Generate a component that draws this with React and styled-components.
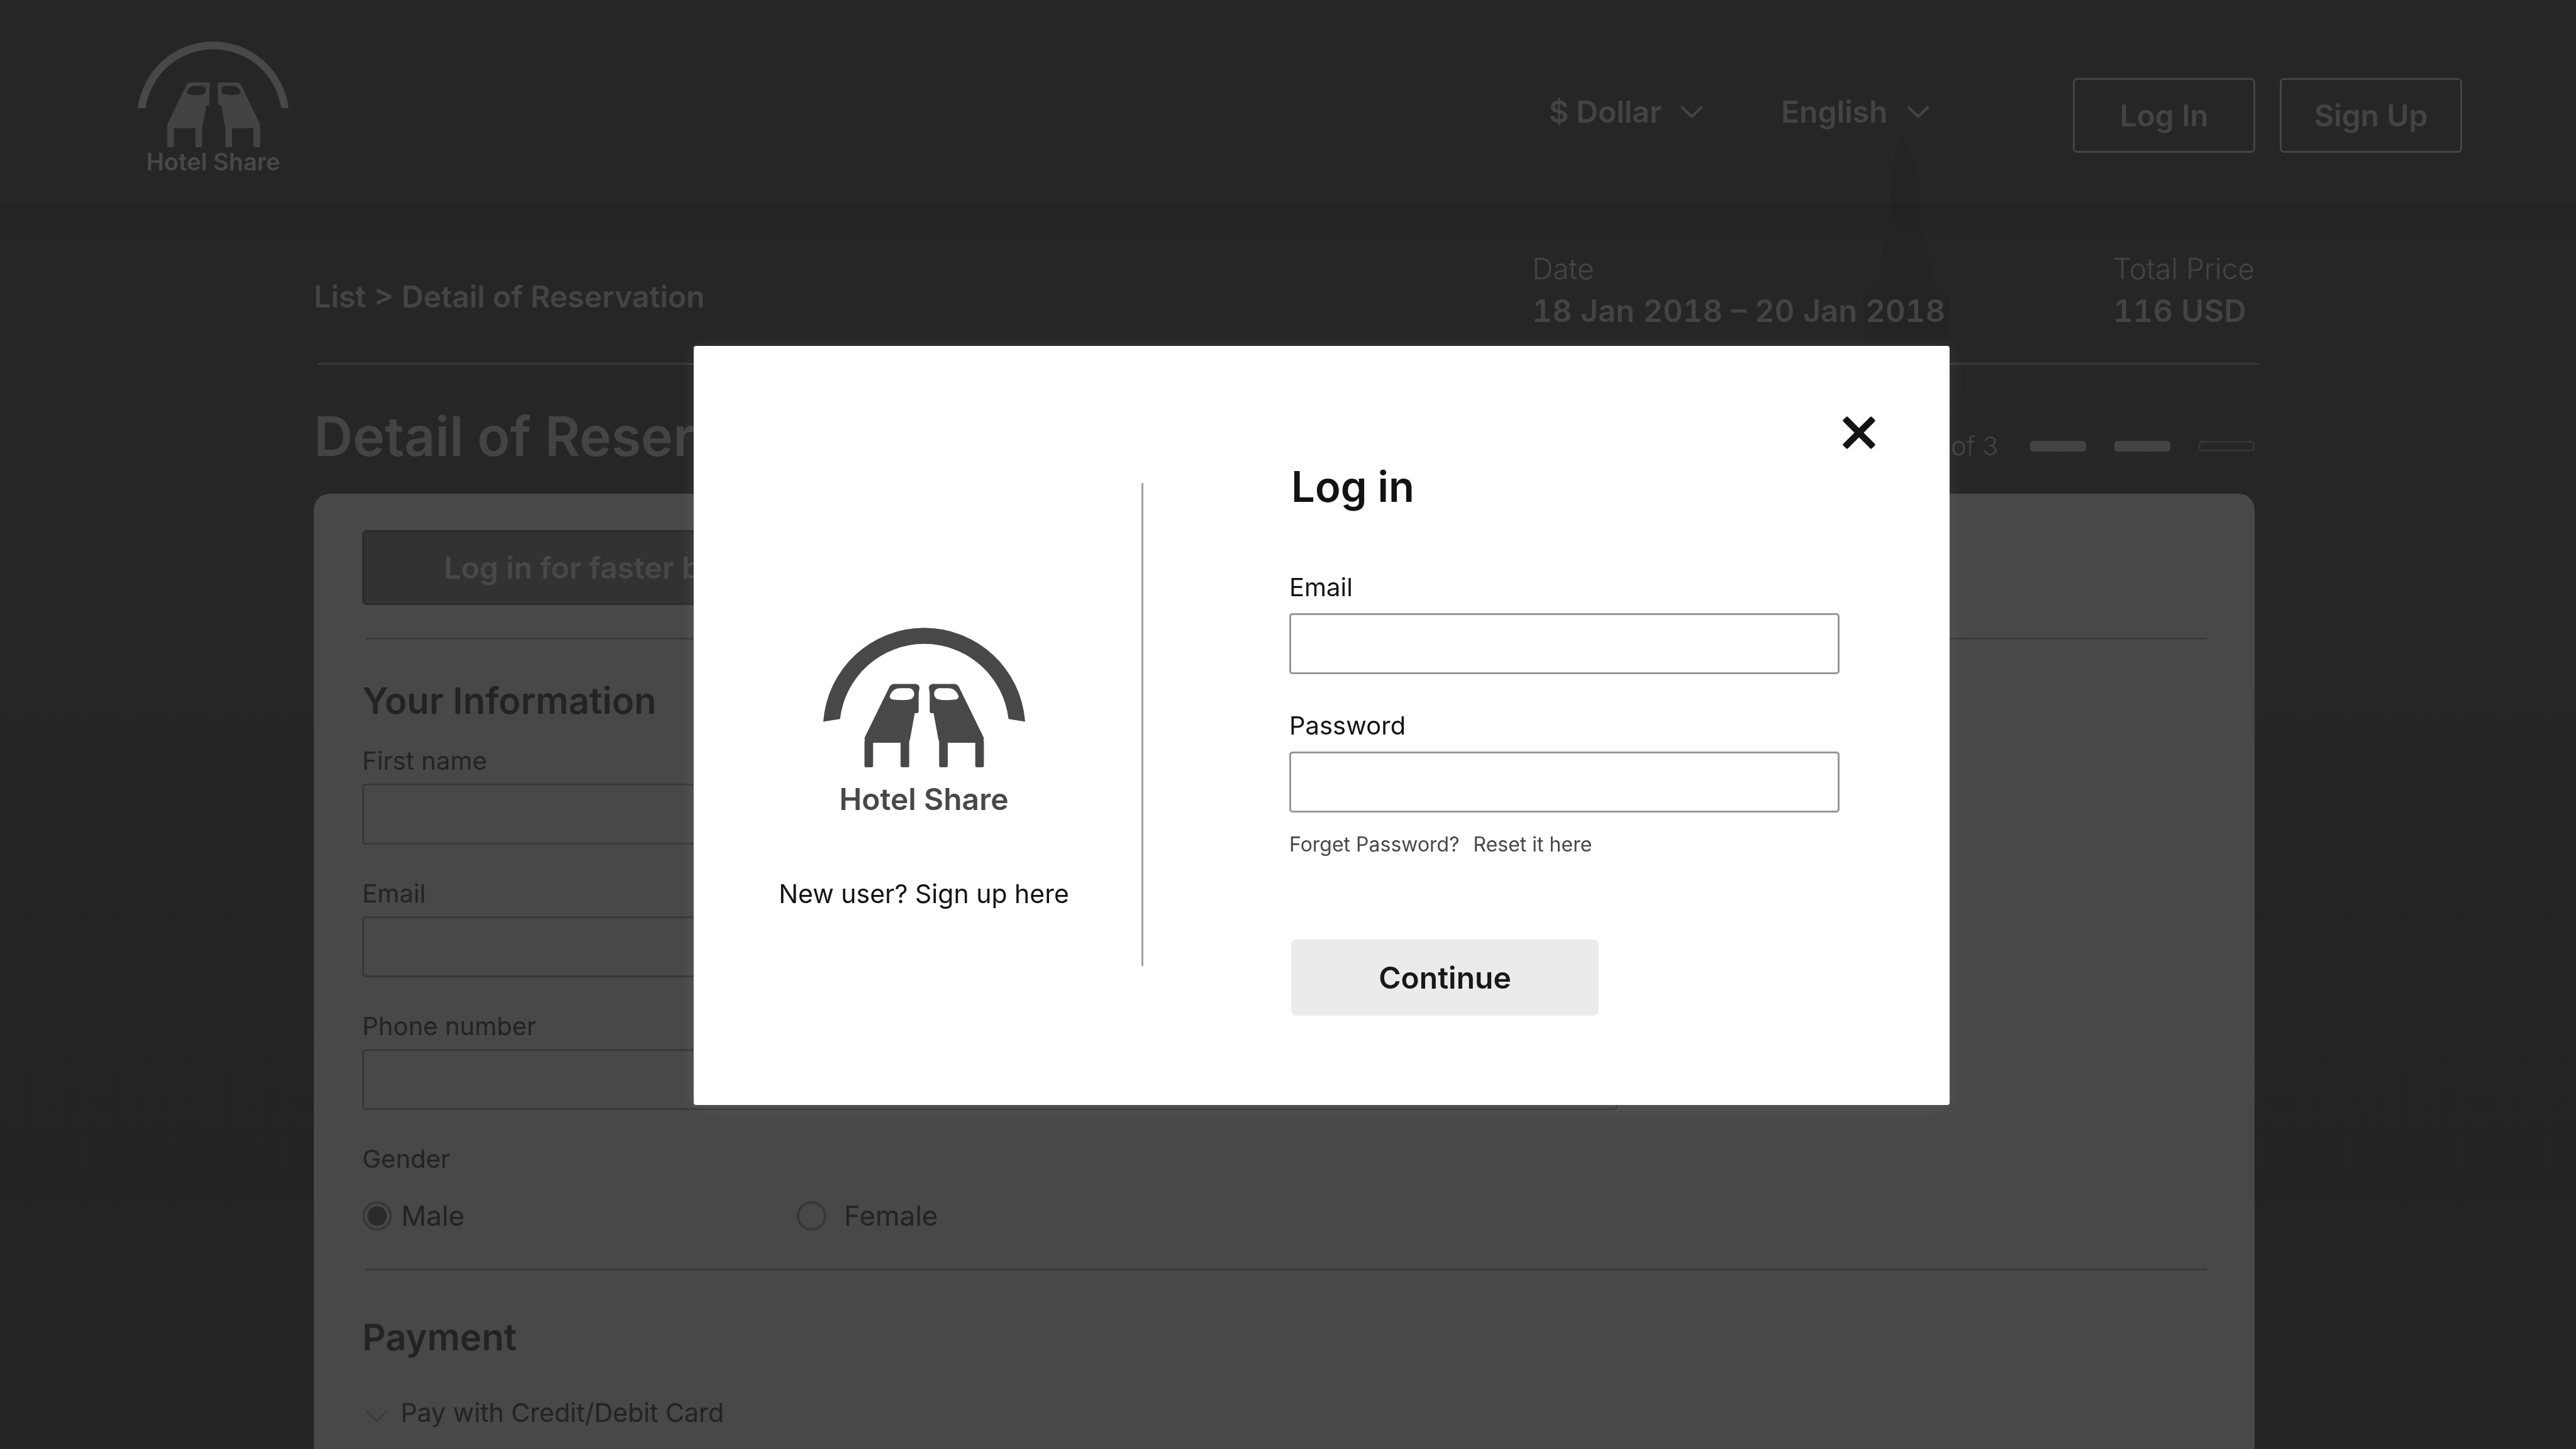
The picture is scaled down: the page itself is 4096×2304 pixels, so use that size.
import React from "react";
import styled, { createGlobalStyle } from "styled-components";

const GlobalStyle = createGlobalStyle`
  *, *::before, *::after { box-sizing: border-box; }
  html, body { margin: 0; background: #252525; }
  body { overflow: hidden; font-family: Inter, "Liberation Sans", sans-serif; }
  button, input, select { font: inherit; color: inherit; margin: 0; }
  h1, h2, p { margin: 0; font-weight: inherit; }
`;

/* ---------- page behind the dialog ---------- */

const Page = styled.div`
  position: relative;
  display: flex;
  flex-direction: column;
  height: 100vh;
  overflow: hidden;
  color: #444444;
  background: linear-gradient(
    180deg,
    #262626 0%,
    #262626 26%,
    #272726 46%,
    #242424 54%,
    #232323 82%,
    #252524 92%,
    #252524 100%
  );
`;

const Skyline = styled.svg`
  position: absolute;
  top: 0;
  right: 0;
  width: 1200px;
  height: 800px;
  fill: #242424;
`;

const Header = styled.header`
  position: relative;
  display: flex;
  justify-content: space-between;
  align-items: flex-start;
  flex: none;
  height: 324px;
  padding: 66px 181px 0 219px;
  box-shadow: 0 8px 48px rgba(0, 0, 0, 0.14);
`;

const Brand = styled.a`
  display: flex;
  flex-direction: column;
  align-items: center;
  color: #484848;
  text-decoration: none;
`;

const BrandName = styled.span`
  font-size: ${(p) => (p.$large ? 48 : 38)}px;
  line-height: ${(p) => (p.$large ? 56 : 44)}px;
  font-weight: 600;
  margin-top: ${(p) => (p.$large ? 23 : 1)}px;
`;

const HeaderMark = styled.svg`
  width: 240px;
  height: 168px;
  fill: currentColor;
  overflow: visible;
`;

const DialogMark = styled.svg`
  width: 321px;
  height: 222px;
  fill: currentColor;
  overflow: visible;
`;

const Nav = styled.nav`
  display: flex;
  align-items: flex-start;
  padding-top: 58px;
  font-size: 48px;
  line-height: 60px;
  font-weight: 600;
`;

const Pickers = styled.div`
  display: flex;
  align-items: center;
  gap: 124px;
  height: 107px;
  margin-right: 228px;
`;

const Picker = styled.label`
  display: flex;
  align-items: center;
  gap: 30px;
`;

const PickerSelect = styled.select`
  appearance: none;
  border: 0;
  padding: 0;
  background: transparent;
  line-height: 60px;
`;

const ChevronIcon = styled.svg`
  width: 36px;
  height: 20px;
  fill: none;
  stroke: currentColor;
  stroke-width: ${(p) => (p.$thin ? 3 : 4)};
  color: ${(p) => (p.$thin ? "#3a3a3a" : "inherit")};
`;

const HeaderButtons = styled.div`
  display: flex;
  gap: 39px;
`;

const OutlineButton = styled.button`
  width: 290px;
  height: 119px;
  padding: 0;
  border: 3px solid #454545;
  border-radius: 7px;
  background: transparent;
`;

const Main = styled.main`
  position: relative;
  display: flex;
  flex-direction: column;
  flex: 1;
  padding: 0 511px 0 499px;
`;

const Summary = styled.div`
  display: flex;
  justify-content: space-between;
  align-items: flex-start;
  padding: 75px 0 52px;
`;

const Breadcrumb = styled.nav`
  padding-top: 43px;
  font-size: 48px;
  line-height: 60px;
  font-weight: 600;
  a { color: inherit; text-decoration: none; }
`;

const Facts = styled.dl`
  display: flex;
  gap: 267px;
  margin: 0;
`;

const Fact = styled.div`
  display: flex;
  flex-direction: column;
  gap: 10px;
`;

const FactName = styled.dt`
  font-size: 46px;
  line-height: 56px;
  font-weight: 300;
`;

const FactValue = styled.dd`
  margin: 0;
  font-size: 49px;
  line-height: 60px;
  font-weight: 600;
  font-variant-numeric: tabular-nums;
`;

const PageRule = styled.hr`
  width: auto;
  height: 3px;
  margin: 0 -8px 0 6px;
  border: 0;
  background: #383838;
`;

const TitleRow = styled.div`
  display: flex;
  justify-content: space-between;
  align-items: flex-end;
  padding: 64px 0 41px;
`;

const Title = styled.h1`
  font-size: 86px;
  line-height: 100px;
  font-weight: 600;
`;

const Steps = styled.div`
  display: flex;
  align-items: center;
  gap: 45px;
  padding-bottom: 11px;
`;

const StepText = styled.span`
  margin-right: 6px;
  font-size: 41px;
  line-height: 48px;
  font-weight: 300;
`;

const StepBar = styled.span`
  width: 89px;
  height: 17px;
  border: 3px solid ${(p) => (p.$done ? "#434343" : "#353535")};
  border-radius: 5px;
  background: ${(p) => (p.$done ? "#434343" : "transparent")};
`;

const Card = styled.section`
  flex: 1;
  padding: 58px 76px 0 77px;
  border-radius: 25px 25px 0 0;
  background: #484848;
  color: #232323;
`;

const FastLogin = styled.button`
  display: block;
  height: 119px;
  padding: 0 127px;
  border: 3px solid #2b2b2b;
  border-radius: 7px;
  background: #323232;
  color: #484848;
  font-size: 48px;
  font-weight: 600;
`;

const CardRule = styled.hr`
  height: 3px;
  margin: ${(p) => p.$above}px 0 ${(p) => p.$below}px 5px;
  border: 0;
  background: #3a3a3a;
`;

const SectionTitle = styled.h2`
  font-size: 58px;
  line-height: 72px;
  font-weight: 600;
  margin-bottom: ${(p) => p.$below}px;
`;

const Fields = styled.div`
  display: flex;
  flex-direction: column;
  gap: ${(p) => p.$gap}px;
`;

const Field = styled.div`
  display: flex;
  flex-direction: column;
  gap: ${(p) => p.$gap}px;
  width: ${(p) => p.$width}px;
  font-size: 40px;
  line-height: 48px;
`;

const TextInput = styled.input`
  width: 100%;
  height: 97px;
  padding: 0 24px;
  border: 3px solid ${(p) => (p.$dim ? "#383838" : "#979797")};
  border-radius: 5px;
  background: transparent;
  outline: 0;
`;

const Gender = styled.fieldset`
  margin: 0;
  padding: 0;
  border: 0;
  font-size: 40px;
  line-height: 48px;
  legend { padding: 0; }
`;

const Options = styled.div`
  display: flex;
  padding-top: 38px;
`;

const Option = styled.label`
  display: flex;
  align-items: center;
  gap: ${(p) => p.$gap}px;
  min-width: 691px;
  font-size: 44px;
  line-height: 56px;
`;

const Radio = styled.input`
  appearance: none;
  display: grid;
  place-items: center;
  width: 47px;
  height: 47px;
  border: 4px solid #383838;
  border-radius: 50%;
  &:checked::before {
    content: "";
    width: 31px;
    height: 31px;
    border-radius: 50%;
    background: #2a2a2a;
  }
`;

const PaymentMethod = styled.button`
  display: flex;
  align-items: center;
  gap: 20px;
  padding: 0 0 0 5px;
  border: 0;
  background: transparent;
  font-size: 41px;
  line-height: 48px;
  svg { margin-top: 12px; }
`;

/* ---------- dialog ---------- */

const Overlay = styled.div`
  position: fixed;
  inset: 0;
  display: flex;
  align-items: center;
  justify-content: center;
  padding: 2px 0 0 107px;
`;

const Dialog = styled.div`
  display: flex;
  width: 1997px;
  border-radius: 4px;
  background: #ffffff;
  color: #131313;
  box-shadow: 0 3px 28px rgba(255, 255, 255, 0.09);
`;

const Aside = styled.div`
  display: flex;
  flex-direction: column;
  align-items: center;
  width: 712px;
  padding: 448px 0 0 20px;
`;

const SignUpLink = styled.a`
  margin-top: 98px;
  color: inherit;
  font-size: 41px;
  line-height: 48px;
  text-decoration: none;
`;

const Divider = styled.div`
  width: 3px;
  margin: 218px 0 221px;
  background: #a0a0a0;
`;

const LoginForm = styled.form`
  display: flex;
  flex-direction: column;
  align-items: flex-start;
  flex: 1;
  padding: 111px 117px 142px 232px;
`;

const CloseButton = styled.button`
  align-self: flex-end;
  width: 54px;
  height: 54px;
  padding: 0;
  border: 0;
  background: transparent;
  svg { display: block; width: 100%; height: 100%; }
`;

const DialogTitle = styled.h2`
  margin: 19px 0 96px 3px;
  font-size: 67px;
  line-height: 80px;
  font-weight: 600;
`;

const Hint = styled.p`
  display: flex;
  gap: 22px;
  margin-top: 31px;
  color: #484848;
  font-size: 32px;
  line-height: 40px;
  a { color: inherit; text-decoration: none; }
`;

const ContinueButton = styled.button`
  width: 489px;
  height: 121px;
  margin: 131px 0 0 3px;
  padding: 0;
  border: 0;
  border-radius: 8px;
  background: #ebebeb;
  color: #17181a;
  font-size: 48px;
  font-weight: 600;
`;

/* ---------- drawings ---------- */

const GUEST =
  "M541 391H645Q664 393 664 412L660 437V524Q660 534 650 534H641L618 660Q616 668 614 671V789Q614 797 606 797H580Q572 797 572 789V678H438V789Q438 797 430 797H404Q396 797 396 789V672Q399 666 397 662Q395 656 398 650L518 405Q526 391 541 391Z" +
  "M567 412H612C645 414 647 458 618 466Q590 474 533 467C520 464 516 453 522 443Q538 412 567 412Z";

function Guests() {
  return (
    <>
      <path fillRule="evenodd" d={GUEST} />
      <path fillRule="evenodd" d={GUEST} transform="translate(1374 0) scale(-1 1)" />
    </>
  );
}

function Chevron({ thin }) {
  return (
    <ChevronIcon $thin={thin} viewBox="0 0 36 20" aria-hidden="true">
      <path d="M1.500 1.500L18 17.500L34.500 1.500" />
    </ChevronIcon>
  );
}

function TextField({ id, label, type = "text", dim, gap, width }) {
  return (
    <Field $gap={gap} $width={width}>
      <label htmlFor={id}>{label}</label>
      <TextInput id={id} type={type} $dim={dim} />
    </Field>
  );
}

export default function App() {
  return (
    <>
      <GlobalStyle />
      <Page>
        <Skyline viewBox="0 0 1200 800" aria-hidden="true">
          <path d="M128 213L118 240L112 300L110 360L96 412L92 452L66 470L72 560H198L204 474L178 452L172 412L158 360L156 300L146 250Z" />
        </Skyline>

        <Header>
          <Brand href="#home">
            <HeaderMark viewBox="174 130 1014 710" aria-hidden="true">
              <path d="M174 580A510.600 510.600 0 0 1 1188 580L1137 576A459.700 459.700 0 0 0 227 576Z" />
              <g fill="#434343" transform="translate(372 405) scale(1.074 1.071) translate(-396 -391)">
                <Guests />
              </g>
            </HeaderMark>
            <BrandName>Hotel Share</BrandName>
          </Brand>
          <Nav>
            <Pickers>
              <Picker>
                <PickerSelect aria-label="Currency">
                  <option>$ Dollar</option>
                </PickerSelect>
                <Chevron />
              </Picker>
              <Picker>
                <PickerSelect aria-label="Language">
                  <option>English</option>
                </PickerSelect>
                <Chevron />
              </Picker>
            </Pickers>
            <HeaderButtons>
              <OutlineButton type="button">Log In</OutlineButton>
              <OutlineButton type="button">Sign Up</OutlineButton>
            </HeaderButtons>
          </Nav>
        </Header>

        <Main>
          <Summary>
            <Breadcrumb>
              <a href="#list">List</a> &gt; <a href="#detail">Detail of Reservation</a>
            </Breadcrumb>
            <Facts>
              <Fact>
                <FactName>Date</FactName>
                <FactValue>18 Jan 2018 – 20 Jan 2018</FactValue>
              </Fact>
              <Fact>
                <FactName>Total Price</FactName>
                <FactValue>116 USD</FactValue>
              </Fact>
            </Facts>
          </Summary>
          <PageRule />
          <TitleRow>
            <Title>Detail of Reservation</Title>
            <Steps>
              <StepText>Step 2 of 3</StepText>
              <StepBar $done />
              <StepBar $done />
              <StepBar />
            </Steps>
          </TitleRow>

          <Card>
            <FastLogin type="button">Log in for faster booking</FastLogin>
            <CardRule $above={52} $below={61} />
            <SectionTitle $below={36}>Your Information</SectionTitle>
            <Fields $gap={54}>
              <TextField id="first-name" label="First name" dim gap={12} width={1996} />
              <TextField id="guest-email" label="Email" type="email" dim gap={12} width={1996} />
              <TextField id="phone" label="Phone number" type="tel" dim gap={12} width={1996} />
              <Gender>
                <legend>Gender</legend>
                <Options>
                  <Option $gap={15}>
                    <Radio type="radio" name="gender" defaultChecked />
                    Male
                  </Option>
                  <Option $gap={28}>
                    <Radio type="radio" name="gender" />
                    Female
                  </Option>
                </Options>
              </Gender>
            </Fields>
            <CardRule $above={56} $below={70} />
            <SectionTitle $below={60}>Payment</SectionTitle>
            <PaymentMethod type="button">
              <Chevron thin />
              Pay with Credit/Debit Card
            </PaymentMethod>
          </Card>
        </Main>
      </Page>

      <Overlay>
        <Dialog role="dialog" aria-modal="true" aria-labelledby="login-title">
          <Aside>
            <Brand href="#home">
              <DialogMark viewBox="195 117 984 680" aria-hidden="true">
                <path d="M195 575A493.300 493.300 0 0 1 1179 575L1098 562A413.200 413.200 0 0 0 277 562Z" />
                <Guests />
              </DialogMark>
              <BrandName $large>Hotel Share</BrandName>
            </Brand>
            <SignUpLink href="#signup">New user? Sign up here</SignUpLink>
          </Aside>
          <Divider />
          <LoginForm>
            <CloseButton type="button" aria-label="Close">
              <svg viewBox="0 0 228 228" fill="currentColor" aria-hidden="true">
                <rect x="-22" y="92" width="272" height="44" rx="8" transform="rotate(45 114 114)" />
                <rect x="-22" y="92" width="272" height="44" rx="8" transform="rotate(-45 114 114)" />
              </svg>
            </CloseButton>
            <DialogTitle id="login-title">Log in</DialogTitle>
            <Fields $gap={58}>
              <TextField id="login-email" label="Email" type="email" gap={17} width={875} />
              <TextField id="login-password" label="Password" type="password" gap={17} width={875} />
            </Fields>
            <Hint>
              <span>Forget Password?</span>
              <a href="#reset">Reset it here</a>
            </Hint>
            <ContinueButton type="submit">Continue</ContinueButton>
          </LoginForm>
        </Dialog>
      </Overlay>
    </>
  );
}
